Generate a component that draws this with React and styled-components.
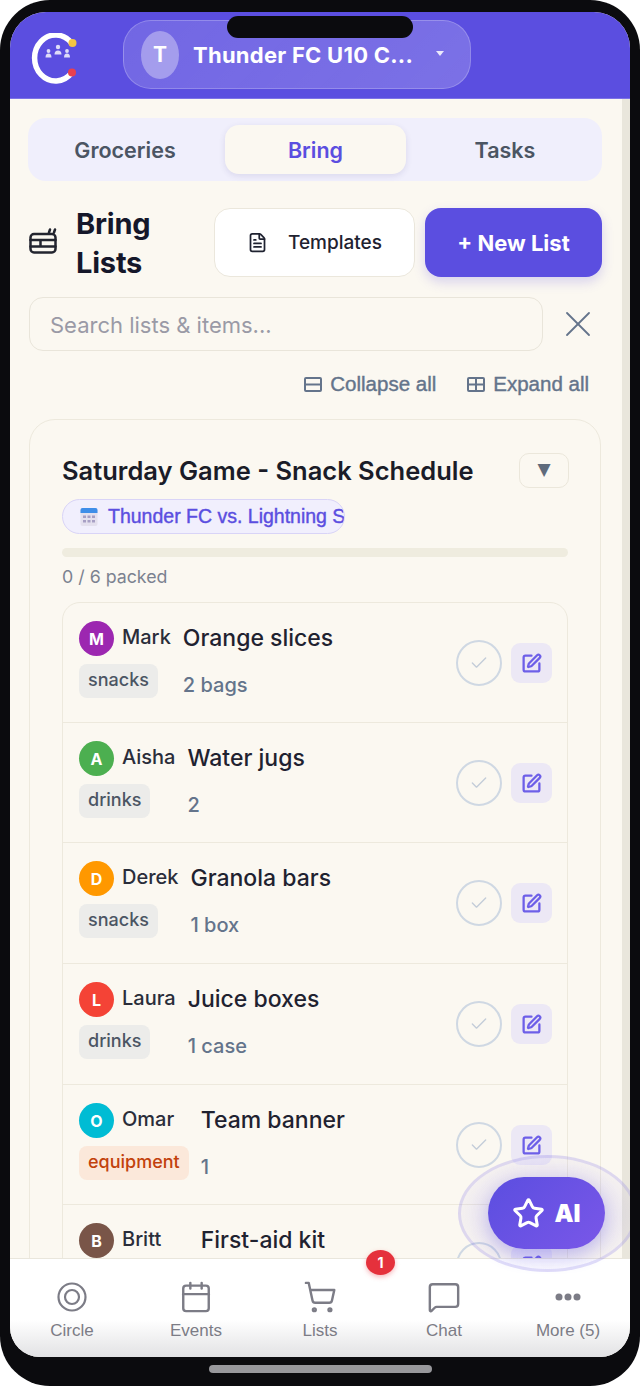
import React from "react";
import styled, { createGlobalStyle } from "styled-components";
import { FileText, X, Calendar, ShoppingCart, MessageSquare, Star, SquarePen, Check } from "lucide-react";

const Global = createGlobalStyle`
  html, body { margin: 0; padding: 0; background: #fff; }
  * { box-sizing: border-box; }
  body { font-family: Inter, "Liberation Sans", sans-serif; }
`;
const Phone = styled.div`
  position: relative; width: 640px; height: 1386px; background: #0b0b0e;
  border-radius: 50px; padding: 12px 10px 29px; display: flex; overflow: hidden;
`;
const Screen = styled.div`
  position: relative; flex: 1; min-width: 0; display: flex; flex-direction: column;
  border-radius: 36px 36px 30px 30px; overflow: hidden; background: #fbf8f1;
`;
const Notch = styled.div`
  position: absolute; left: 227px; top: 16px; width: 186px; height: 22px;
  background: #0b0b0e; border-radius: 11px; z-index: 5;
`;
const HomeBar = styled.div`
  position: absolute; left: 209px; top: 1365px; width: 223px; height: 8px;
  background: #98989c; border-radius: 4px;
`;
const Header = styled.header`
  flex: none; height: 87px; background: #5b4ee0; display: flex; align-items: center;
  padding: 3px 0 0 21px; gap: 46px; border-bottom: 1px solid #7d72e6;
`;
const LogoMark = styled.svg`
  flex: none; margin-top: 5px;
`;
const Pill = styled.div`
  width: 348px; height: 69px; margin-top: -4px; border-radius: 28px;
  border: 1.5px solid rgba(255,255,255,.22);
  background: linear-gradient(135deg, rgba(255,255,255,.14), rgba(255,255,255,.2));
  display: flex; align-items: center; padding-left: 17px; color: #fff;
`;
const TeamAvatar = styled.div`
  width: 38px; height: 48px; border-radius: 50%; background: rgba(255,255,255,.35);
  display: flex; align-items: center; justify-content: center; font-weight: 700; font-size: 21px;
`;
const TeamName = styled.div`
  margin-left: 14px; width: 220px; font-weight: 700; font-size: 22px; letter-spacing: .25px; white-space: nowrap; overflow: hidden;
`;
const Caret = styled.div`
  margin-left: 23px; width: 0; height: 0; margin-top: -2px;
  border-left: 4.5px solid transparent; border-right: 4.5px solid transparent;
  border-top: 5px solid rgba(255,255,255,.85);
`;
const Main = styled.main`
  flex: 1; min-height: 0; overflow: hidden; display: flex;
`;
const Content = styled.div`
  flex: 1; min-width: 0; padding: 19px 20px 0 18px;
`;
const Scrollbar = styled.div`
  flex: none; width: 8px; background: #e9e6dc;
`;
const Tabs = styled.div`
  height: 63px; background: #f0effc; border-radius: 18px; display: flex;
  padding: 7px 0;
`;
const Tab = styled.div`
  flex: none; width: ${p => p.$w}px; padding-right: ${p => p.$pr || 0}px; padding-left: ${p => p.$pl || 0}px;
  display: flex; align-items: center; justify-content: center;
  font-size: 21.5px; font-weight: 600; border-radius: 14px;
  color: ${p => p.$active ? "#5b4ee0" : "#4b5563"};
  background: ${p => p.$active ? "#fbf8f1" : "transparent"};
  box-shadow: ${p => p.$active ? "0 2px 6px rgba(60,50,120,.12)" : "none"};
`;
const TitleRow = styled.div`
  margin-top: 27px; height: 69px; display: flex; align-items: center;
`;
const TitleIcon = styled.svg`
  flex: none; margin: -3px 19px 0 1px; width: 28px; height: 26px;
`;
const PageTitle = styled.h1`
  margin: 0; width: 138px; font-size: 29px; line-height: 39px; font-weight: 700; color: #15172a;
  letter-spacing: -.2px;
`;
const TemplatesButton = styled.div`
  width: 201px; height: 69px; background: #fff; border: 1.5px solid #ebe7dc; border-radius: 16px;
  display: flex; align-items: center; justify-content: center; gap: 20px;
  font-size: 19px; font-weight: 500; color: #1f2230;
`;
const NewButton = styled.div`
  margin-left: 10px; width: 177px; height: 69px; background: #5b4ee0; border-radius: 16px; color: #fff;
  display: flex; align-items: center; justify-content: center; font-size: 22px; font-weight: 700;
  box-shadow: 0 5px 12px rgba(91,78,224,.22);
`;
const SearchRow = styled.div`
  margin-top: 20px; display: flex; align-items: center; margin-left: 1px;
`;
const SearchBox = styled.div`
  width: 514px; height: 54px; border: 1.5px solid #e9e5da; border-radius: 14px; display: flex; align-items: center;
  padding: 1px 0 0 20px; font-size: 22px; color: #9a9aa6;
`;
const CloseIcon = styled(X)`
  margin-left: 13px; color: #64748b;
`;
const ToolRow = styled.div`
  margin-top: 18px; height: 30px; display: flex; justify-content: flex-end; gap: 31px; padding-right: 13px;
`;
const ToolButton = styled.div`
  display: flex; align-items: center; gap: 8px; font-family: "Liberation Sans", sans-serif;
  font-size: 20.5px; font-weight: 400; color: #64748b; -webkit-text-stroke: .4px #64748b;
`;
const Card = styled.section`
  margin-top: 20px; margin-left: 1px; width: 572px; border: 1.5px solid #ede9dd; border-radius: 26px; padding: 33px 32px 0;
`;
const CardHead = styled.div`
  display: flex; align-items: flex-start; justify-content: space-between;
`;
const CardTitle = styled.h2`
  margin: 2px 0 0; font-size: 25.5px; line-height: 32px; font-weight: 600; color: #1a1c28;
`;
const Collapse = styled.div`
  width: 50px; height: 35px; margin-right: -1px; padding-bottom: 3px; border: 1.5px solid #ebe7db; border-radius: 10px; display: flex; align-items: center;
  justify-content: center; color: #5f6b7c; font-size: 17px; font-family: "DejaVu Sans", sans-serif;
`;
const Chip = styled.div`
  margin-top: 11px; width: 283px; height: 35px; border: 1.5px solid #d9d4f7; background: #f1effd; border-radius: 18px;
  display: flex; align-items: center; padding-left: 17px; gap: 10px; overflow: hidden; white-space: nowrap;
  font-family: "Liberation Sans", sans-serif; font-size: 19.5px; color: #5b4ee0; -webkit-text-stroke: .4px #5b4ee0;
`;
const CalIcon = styled.svg`
  flex: none; width: 18px; height: 20px;
`;
const Progress = styled.div`
  margin-top: 14px; height: 9px; border-radius: 5px; background: #efecdf;
`;
const Packed = styled.div`
  margin-top: 9px; font-size: 17.8px; line-height: 22px; color: #7b8290;
`;
const Items = styled.div`
  margin-top: 14px; border: 1.5px solid #ede9dd; border-radius: 18px;
`;
const Row = styled.div`
  height: ${p => p.$h || 120}px; padding: 18px 15px 0 16px; display: flex; align-items: flex-start;
  border-bottom: 1.5px solid #ede9dd;
`;
const Left = styled.div`
  flex: none; display: flex; flex-direction: column; align-items: flex-start; gap: 8px;
`;
const Who = styled.div`
  display: flex; align-items: center; gap: 8px; font-size: 20px; font-weight: 500; color: #2a2d3a;
`;
const WhoName = styled.span`
  margin-top: -4px;
`;
const Avatar = styled.div`
  width: 35px; height: 35px; border-radius: 50%; background: ${p => p.$c}; color: #fff;
  display: flex; align-items: center; justify-content: center; font-weight: 700; font-size: 16px;
`;
const Tag = styled.div`
  height: 34px; padding: 0 9px 4px; border-radius: 8px; display: flex; align-items: center; font-size: 18px; font-weight: 500;
  background: ${p => p.$eq ? "#fbe8da" : "#ececea"}; color: ${p => p.$eq ? "#c2410c" : "#4b5563"};
`;
const Mid = styled.div`
  flex: 1; margin-left: 12px; min-width: 0;
`;
const ItemTitle = styled.div`
  font-size: 23px; font-weight: 500; line-height: 34px; color: #1f2230;
`;
const Qty = styled.div`
  margin-top: 18px; font-size: 20px; font-weight: 500; line-height: 24px; color: #64748b;
`;
const CheckRing = styled.div`
  flex: none; margin-top: 19px; width: 46px; height: 46px; border-radius: 50%; border: 2.5px solid #cfd8e3;
  display: flex; align-items: center; justify-content: center; color: #c3ccd8;
`;
const EditButton = styled.div`
  flex: none; margin: 22px 0 0 9px; width: 41px; height: 40px; border-radius: 9px; background: #ece8f5;
  display: flex; align-items: center; justify-content: center; color: #6d5fe8;
`;
const Nav = styled.nav`
  flex: none; height: 99px; display: flex; position: relative; border-top: 1px solid #e9e6dc;
  background: linear-gradient(#fff 0, #fff 62%, #e2e2e4 100%);
`;
const NavItem = styled.div`
  flex: 1; display: flex; flex-direction: column; align-items: center; padding-top: 21px; gap: 7px;
  color: #7c7c86; font-family: "Liberation Sans", sans-serif; font-size: 17px;
`;
const NavIcon = styled.div`
  height: 34px; display: flex; align-items: center; justify-content: center;
`;
const Badge = styled.div`
  position: absolute; left: 356px; top: 1238px; width: 29px; height: 25px; border-radius: 50%; background: #e5313c;
  color: #fff; font-size: 14px; font-weight: 700; display: flex; align-items: center; justify-content: center;
  box-shadow: 0 2px 5px rgba(229,49,60,.35); z-index: 4;
`;
const Halo = styled.div`
  position: absolute; left: 448px; top: 1143px; width: 179px; height: 117px; border-radius: 50%;
  border: 3px solid rgba(130,115,230,.2);
  background: radial-gradient(closest-side, rgba(120,105,235,.28), rgba(120,105,235,.05));
  filter: blur(.6px); z-index: 3;
`;
const Fab = styled.div`
  position: absolute; left: 478px; top: 1165px; width: 117px; height: 72px; border-radius: 36px; z-index: 4;
  background: linear-gradient(135deg, #5b4ee0, #7a57e8); color: #fff; display: flex; align-items: center; justify-content: center;
  gap: 9px; font-weight: 900; font-size: 24px; box-shadow: 0 6px 18px rgba(91,78,224,.3);
`;

const rows = [
  ["M", "#9c27b0", "Mark", "snacks", "Orange slices", "2 bags", 120],
  ["A", "#4caf50", "Aisha", "drinks", "Water jugs", "2", 120],
  ["D", "#ff9800", "Derek", "snacks", "Granola bars", "1 box", 121],
  ["L", "#f44336", "Laura", "drinks", "Juice boxes", "1 case", 121],
  ["O", "#00bcd4", "Omar", "equipment", "Team banner", "1", 120],
  ["B", "#795548", "Britt", "equipment", "First-aid kit", "1 kit", 120],
];

const Logo = () => (
  <LogoMark width="46" height="52" viewBox="0 0 46 52">
    <path d="M40.5 10A21 23 0 1 0 40.5 40" fill="none" stroke="#fff" strokeWidth="5.5" strokeLinecap="round" />
    <circle cx="41.5" cy="10" r="4" fill="#f5c542" />
    <circle cx="41" cy="39.500" r="4" fill="#e8404f" />
    <g fill="#dedcf8">
      <circle cx="27" cy="14" r="2.200" /><path d="M23.500 21.500c0-2.600 1.300-4 3.500-4s3.500 1.400 3.500 4z" />
      <circle cx="17.500" cy="18" r="1.900" /><path d="M14.500 24.500c0-2.600 1-4 3-4s3 1.400 3 4z" />
      <circle cx="36" cy="18" r="1.900" /><path d="M33 24.500c0-2.600 1-4 3-4s3 1.400 3 4z" />
    </g>
  </LogoMark>
);

export default function App() {
  return (
    <>
      <Global />
      <Phone>
        <Screen>
          <Header>
            <Logo />
            <Pill>
              <TeamAvatar>T</TeamAvatar>
              <TeamName>Thunder FC U10 C...</TeamName>
              <Caret />
            </Pill>
          </Header>
          <Main>
            <Content>
              <Tabs>
                <Tab $w={197} $pr={3}>Groceries</Tab>
                <Tab $w={181} $active>Bring</Tab>
                <Tab $w={196} $pl={2}>Tasks</Tab>
              </Tabs>
              <TitleRow>
                <TitleIcon viewBox="0 0 28 26" fill="none" stroke="#23252f" strokeWidth="2.500" strokeLinecap="round" strokeLinejoin="round">
                  <rect x="1.500" y="6" width="25" height="18.500" rx="3.500" />
                  <path d="M1.500 12h25M1.500 18.500h25M11.500 12v6.500M20 4.500l1-3M25 4.500l1-3" />
                </TitleIcon>
                <PageTitle>Bring Lists</PageTitle>
                <TemplatesButton><FileText size={21} strokeWidth={2} />Templates</TemplatesButton>
                <NewButton>+ New List</NewButton>
              </TitleRow>
              <SearchRow>
                <SearchBox>Search lists &amp; items...</SearchBox>
                <CloseIcon size={44} strokeWidth={1} />
              </SearchRow>
              <ToolRow>
                <ToolButton>
                  <svg width="18" height="15" viewBox="0 0 18 15" fill="none" stroke="#64748b" strokeWidth="2"><rect x="1" y="1" width="16" height="13" rx="1" /><path d="M1 7.500h16" /></svg>
                  Collapse all
                </ToolButton>
                <ToolButton>
                  <svg width="18" height="15" viewBox="0 0 18 15" fill="none" stroke="#64748b" strokeWidth="2"><rect x="1" y="1" width="16" height="13" rx="1" /><path d="M1 7.500h16M9 1v13" /></svg>
                  Expand all
                </ToolButton>
              </ToolRow>
              <Card>
                <CardHead>
                  <CardTitle>Saturday Game - Snack Schedule</CardTitle>
                  <Collapse>▼</Collapse>
                </CardHead>
                <Chip>
                  <CalIcon viewBox="0 0 18 20">
                    <rect x="0.500" y="1" width="17" height="18" rx="2" fill="#e4e0ee" />
                    <path d="M0.500 3a2 2 0 0 1 2-2h13a2 2 0 0 1 2 2v3h-17z" fill="#3f8ee8" />
                    <g fill="#a79fc4"><rect x="3" y="8.500" width="3" height="2.500" /><rect x="7.500" y="8.500" width="3" height="2.500" /><rect x="12" y="8.500" width="3" height="2.500" /><rect x="3" y="13" width="3" height="2.500" /><rect x="7.500" y="13" width="3" height="2.500" /><rect x="12" y="13" width="3" height="2.500" /></g>
                  </CalIcon>
                  Thunder FC vs. Lightning Sharks
                </Chip>
                <Progress />
                <Packed>0 / 6 packed</Packed>
                <Items>
                  {rows.map(([i, c, n, t, title, q, h]) => (
                    <Row key={n} $h={h}>
                      <Left>
                        <Who><Avatar $c={c}>{i}</Avatar><WhoName>{n}</WhoName></Who>
                        <Tag $eq={t === "equipment"}>{t}</Tag>
                      </Left>
                      <Mid>
                        <ItemTitle>{title}</ItemTitle>
                        <Qty>{q}</Qty>
                      </Mid>
                      <CheckRing><Check size={20} strokeWidth={1.6} /></CheckRing>
                      <EditButton><SquarePen size={21} strokeWidth={2.6} /></EditButton>
                    </Row>
                  ))}
                </Items>
              </Card>
            </Content>
            <Scrollbar />
          </Main>
          <Nav>
            <NavItem>
              <NavIcon><svg width="30" height="30" viewBox="0 0 30 30" fill="none" stroke="#7c7c86" strokeWidth="2.200"><circle cx="15" cy="15" r="13.500" /><circle cx="15" cy="15" r="7" /></svg></NavIcon>
              Circle
            </NavItem>
            <NavItem><NavIcon><Calendar size={34} strokeWidth={1.7} /></NavIcon>Events</NavItem>
            <NavItem><NavIcon><ShoppingCart size={34} strokeWidth={1.7} /></NavIcon>Lists</NavItem>
            <NavItem><NavIcon><MessageSquare size={34} strokeWidth={1.7} /></NavIcon>Chat</NavItem>
            <NavItem>
              <NavIcon><svg width="26" height="8" viewBox="0 0 26 8" fill="#7c7c86"><circle cx="4" cy="4" r="3.500" /><circle cx="13" cy="4" r="3.500" /><circle cx="22" cy="4" r="3.500" /></svg></NavIcon>
              More (5)
            </NavItem>
          </Nav>
          <Halo />
          <Fab><Star size={33} strokeWidth={2.2} />AI</Fab>
          <Badge>1</Badge>
        </Screen>
        <Notch />
        <HomeBar />
      </Phone>
    </>
  );
}
